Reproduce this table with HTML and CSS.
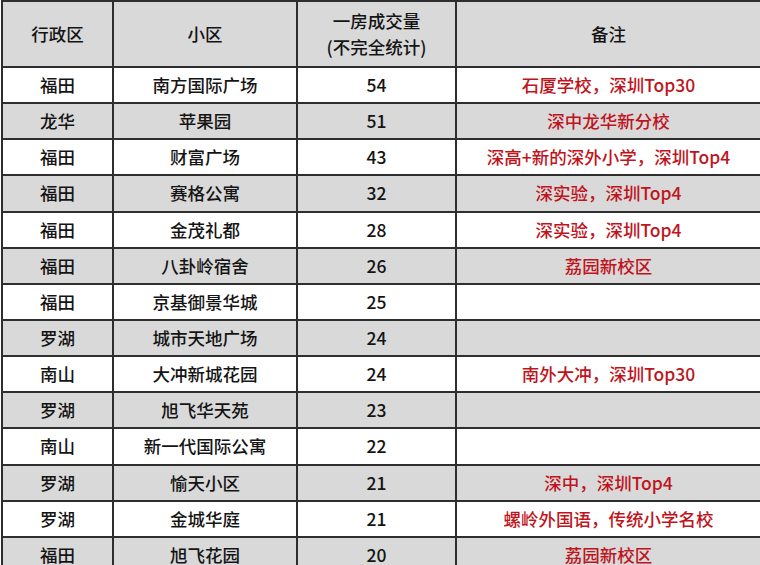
FILE: index.html
```html
<!DOCTYPE html>
<html lang="zh-CN">
<head>
<meta charset="utf-8">
<link rel="stylesheet" href="styles.css">
</head>
<body>
<table class="deals">
  <colgroup>
    <col class="c1"><col class="c2"><col class="c3"><col class="c4">
  </colgroup>
  <thead>
    <tr class="head">
      <th>行政区</th>
      <th>小区</th>
      <th>一房成交量<br>(不完全统计)</th>
      <th>备注</th>
    </tr>
  </thead>
  <tbody>
    <tr><td>福田</td><td>南方国际广场</td><td>54</td><td class="note">石厦学校，深圳Top30</td></tr>
    <tr class="alt"><td>龙华</td><td>苹果园</td><td>51</td><td class="note">深中龙华新分校</td></tr>
    <tr><td>福田</td><td>财富广场</td><td>43</td><td class="note">深高+新的深外小学，深圳Top4</td></tr>
    <tr class="alt"><td>福田</td><td>赛格公寓</td><td>32</td><td class="note">深实验，深圳Top4</td></tr>
    <tr><td>福田</td><td>金茂礼都</td><td>28</td><td class="note">深实验，深圳Top4</td></tr>
    <tr class="alt"><td>福田</td><td>八卦岭宿舍</td><td>26</td><td class="note">荔园新校区</td></tr>
    <tr><td>福田</td><td>京基御景华城</td><td>25</td><td class="note"></td></tr>
    <tr class="alt"><td>罗湖</td><td>城市天地广场</td><td>24</td><td class="note"></td></tr>
    <tr><td>南山</td><td>大冲新城花园</td><td>24</td><td class="note">南外大冲，深圳Top30</td></tr>
    <tr class="alt"><td>罗湖</td><td>旭飞华天苑</td><td>23</td><td class="note"></td></tr>
    <tr><td>南山</td><td>新一代国际公寓</td><td>22</td><td class="note"></td></tr>
    <tr class="alt"><td>罗湖</td><td>愉天小区</td><td>21</td><td class="note">深中，深圳Top4</td></tr>
    <tr><td>罗湖</td><td>金城华庭</td><td>21</td><td class="note">螺岭外国语，传统小学名校</td></tr>
    <tr class="alt"><td>福田</td><td>旭飞花园</td><td>20</td><td class="note">荔园新校区</td></tr>
  </tbody>
</table>
</body>
</html>
```

FILE: styles.css
```css
html, body {
  margin: 0;
  padding: 0;
  background: #ffffff;
}
body {
  padding: 0 0 0 1px;
  font-family: "Noto Sans CJK SC", "Noto Sans", sans-serif;
  color: #141414;
}
.deals {
  border-collapse: collapse;
  table-layout: fixed;
  width: 759px;
  font-size: 17.5px;
}
.c1 { width: 111px; }
.c2 { width: 184px; }
.c3 { width: 159px; }
.c4 { width: 305px; }
.deals th, .deals td {
  border: 2px solid #2e2e2e;
  text-align: center;
  vertical-align: middle;
  padding: 0;
  font-weight: 500;
  overflow: hidden;
  white-space: nowrap;
}
.head th {
  background: #d9d9d9;
  height: 64px;
  line-height: 26px;
}
.deals td {
  height: 34.15px;
  line-height: 24px;
}
.alt td {
  background: #d9d9d9;
}
.deals td.note {
  color: #c0141c;
}
```
